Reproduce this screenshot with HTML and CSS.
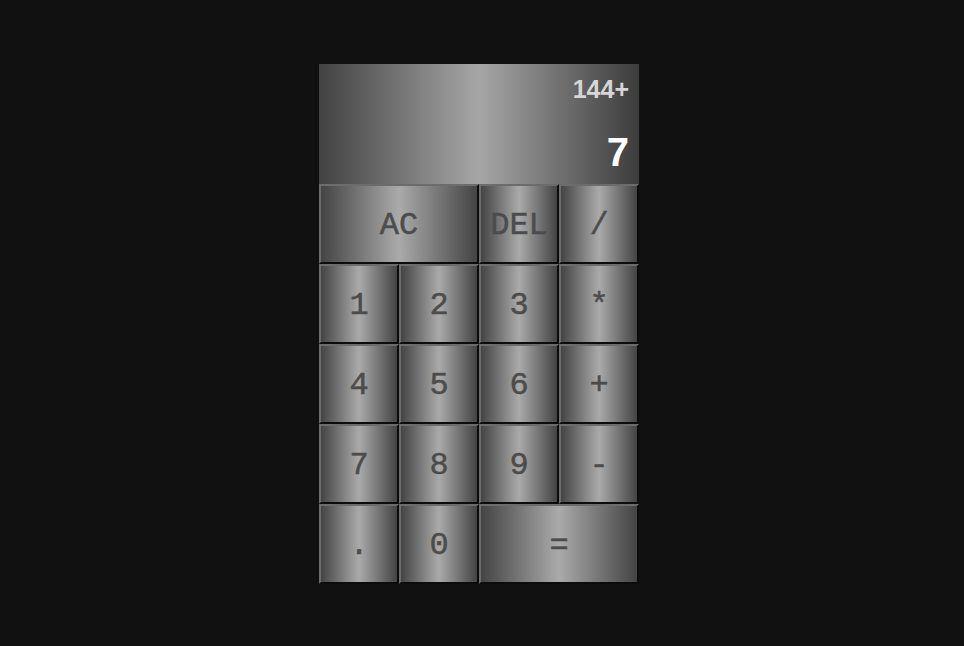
FILE: index.html
```html
<!DOCTYPE html>
<html lang="en">
<head>
<meta charset="utf-8">
<title>Calculator</title>
<link rel="stylesheet" href="styles.css">
</head>
<body>
<div class="calculator">
  <div class="display">
    <div class="previous">144+</div>
    <div class="current">7</div>
  </div>
  <div class="keys">
    <button class="key span-two">AC</button>
    <button class="key">DEL</button>
    <button class="key">/</button>
    <button class="key">1</button>
    <button class="key">2</button>
    <button class="key">3</button>
    <button class="key">*</button>
    <button class="key">4</button>
    <button class="key">5</button>
    <button class="key">6</button>
    <button class="key">+</button>
    <button class="key">7</button>
    <button class="key">8</button>
    <button class="key">9</button>
    <button class="key">-</button>
    <button class="key">.</button>
    <button class="key">0</button>
    <button class="key span-two">=</button>
  </div>
</div>
</body>
</html>
```
FILE: styles.css
```css
* {
  box-sizing: border-box;
}

html, body {
  margin: 0;
  padding: 0;
}

body {
  background: #111111;
  height: 100vh;
  display: flex;
  justify-content: center;
  align-items: center;
  padding-right: 6px;
  padding-top: 2px;
  font-family: "Liberation Sans", Arial, sans-serif;
}

.calculator {
  width: 320px;
  display: flex;
  flex-direction: column;
}

.display {
  height: 120px;
  padding: 11px 10px 9px 10px;
  display: flex;
  flex-direction: column;
  justify-content: space-between;
  align-items: flex-end;
  background: linear-gradient(to right, #424242 0%, #a6a6a6 50%, #3c3c3c 100%);
  font-weight: bold;
}

.previous {
  font-size: 25px;
  color: #d6d6d6;
}

.current {
  font-size: 40px;
  color: #ffffff;
}

.keys {
  display: grid;
  grid-template-columns: repeat(4, 80px);
  grid-auto-rows: 80px;
}

.key {
  margin: 0;
  padding: 3px 0 0 0;
  font-family: "Liberation Mono", "Courier New", monospace;
  font-size: 32px;
  font-weight: normal;
  color: #4c4c4c;
  -webkit-text-stroke: 0.5px #4c4c4c;
  background: linear-gradient(to right, #444444 0%, #aaaaaa 50%, #444444 100%);
  border-top: 2px solid #6c6c6c;
  border-left: 2px solid #6c6c6c;
  border-right: 2px solid #0c0c0c;
  border-bottom: 2px solid #0c0c0c;
  cursor: pointer;
}

.span-two {
  grid-column: span 2;
}
```
